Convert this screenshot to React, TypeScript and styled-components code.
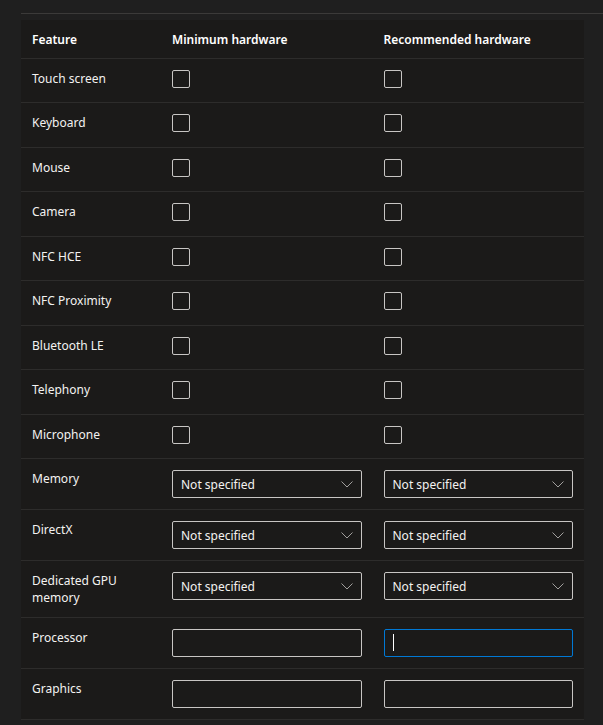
import React from "react";
import styled, { createGlobalStyle } from "styled-components";

const GlobalStyle = createGlobalStyle`
  body {
    margin: 0;
    background-color: #1f1f1f;
    font-family: "Noto Sans", "Open Sans", sans-serif;
    font-size: 12px;
    color: #f3f2f1;
  }
`;

const checkFeatures = [
  "Touch screen",
  "Keyboard",
  "Mouse",
  "Camera",
  "NFC HCE",
  "NFC Proximity",
  "Bluetooth LE",
  "Telephony",
  "Microphone",
];

const selectFeatures = ["Memory", "DirectX", "Dedicated GPU memory"];

const Page = styled.div`
  padding: 13px 0 0 21px;
`;

const Section = styled.div`
  border-top: 1px solid #3b3a39;
  padding-top: 6px;
`;

const Table = styled.div`
  width: 563px;
  background-color: #1b1a19;
`;

const Row = styled.div<{ $header?: boolean }>`
  display: grid;
  grid-template-columns: 140px 1fr 1fr;
  padding: 11px 0 ${(p) => (p.$header ? "10px" : "11px")};
  border-bottom: 1px solid #2d2c2b;
`;

const Cell = styled.div<{ $height?: number }>`
  padding: 0 11px;
  line-height: 17px;
  min-height: ${(p) => (p.$height ? `${p.$height}px` : "auto")};
  min-width: 0;
`;

const HeadCell = styled(Cell)`
  font-weight: 600;
  color: #ffffff;
`;

const Label = styled(Cell)`
  color: #f3f2f1;
`;

const Box = styled.div`
  width: 18px;
  height: 18px;
  box-sizing: border-box;
  border: 1px solid #c8c6c4;
  border-radius: 2px;
`;

const Select = styled.div`
  height: 28px;
  box-sizing: border-box;
  border: 1px solid #c8c6c4;
  border-radius: 2px;
  display: flex;
  align-items: center;
  justify-content: space-between;
  padding: 1px 8px 0;
  color: #f3f2f1;
`;

const Input = styled.div<{ $focused?: boolean }>`
  height: 28px;
  box-sizing: border-box;
  border: 1px solid ${(p) => (p.$focused ? "#0078d4" : "#c8c6c4")};
  border-radius: 2px;
  display: flex;
  align-items: center;
  padding: 0 8px;
`;

const Caret = styled.div`
  width: 1px;
  height: 17px;
  background-color: #ffffff;
`;

const Chevron = () => (
  <svg width="12" height="7" viewBox="0 0 12 7">
    <polyline
      points="0.5,0.5 6,6 11.5,0.5"
      fill="none"
      stroke="#a19f9d"
      strokeWidth="1"
    />
  </svg>
);

const App = () => {
  return (
    <Page>
      <GlobalStyle />
      <Section>
        <Table>
          <Row $header>
            <HeadCell>Feature</HeadCell>
            <HeadCell>Minimum hardware</HeadCell>
            <HeadCell>Recommended hardware</HeadCell>
          </Row>
          {checkFeatures.map((name) => (
            <Row key={name}>
              <Label $height={21.44}>{name}</Label>
              <Cell>
                <Box />
              </Cell>
              <Cell>
                <Box />
              </Cell>
            </Row>
          ))}
          {selectFeatures.map((name) => (
            <Row key={name}>
              <Label>{name}</Label>
              <Cell>
                <Select>
                  <span>Not specified</span>
                  <Chevron />
                </Select>
              </Cell>
              <Cell>
                <Select>
                  <span>Not specified</span>
                  <Chevron />
                </Select>
              </Cell>
            </Row>
          ))}
          <Row>
            <Label>Processor</Label>
            <Cell>
              <Input />
            </Cell>
            <Cell>
              <Input $focused>
                <Caret />
              </Input>
            </Cell>
          </Row>
          <Row>
            <Label>Graphics</Label>
            <Cell>
              <Input />
            </Cell>
            <Cell>
              <Input />
            </Cell>
          </Row>
        </Table>
      </Section>
    </Page>
  );
};

export default App;
